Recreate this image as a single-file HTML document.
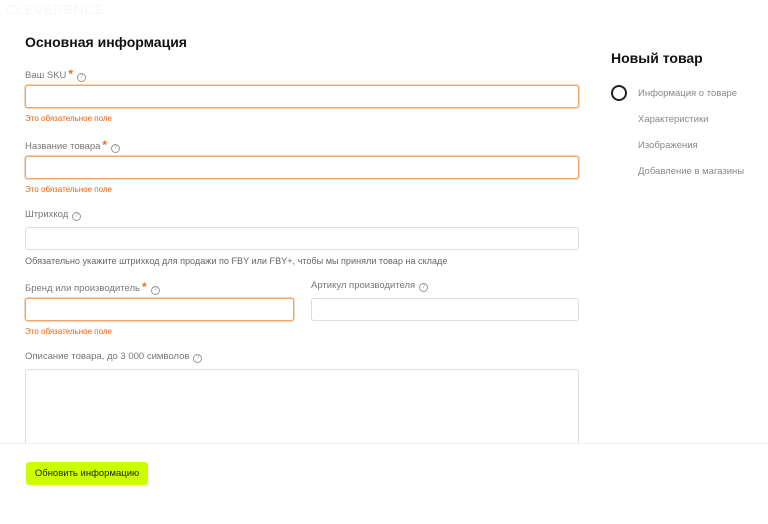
<!DOCTYPE html><html><head><meta charset="utf-8"><style>
*{box-sizing:border-box;margin:0;padding:0}
body{width:768px;height:524px;background:#fff;font-family:"Liberation Sans",sans-serif;position:relative;overflow:hidden;color:#222}
.a{position:absolute}
.t{font-size:14px;font-weight:bold;color:#111}
.l{font-size:9.5px;color:#777;white-space:nowrap}
.l b{color:#f06a1e;font-size:12px;margin-left:2px}
.q{display:inline-block;width:9px;height:9px;border:1px solid #999;border-radius:50%;font-size:6px;line-height:7px;text-align:center;color:#999;margin-left:4px;vertical-align:0}
.i{border:1px solid #ddd;border-radius:3px;background:#fff}
.e{border-color:#f0a56a;box-shadow:0 0 0 1px #f7d2b3}
.er{font-size:8px;color:#e8620f}
.s{font-size:9.5px;color:#888}
</style></head><body>
<div class="a" style="left:6px;top:2px;font-size:13px;color:#f6f6f6;letter-spacing:1px">CLEVERENCE</div>
<div class="a t" style="left:25px;top:34px">Основная информация</div>
<div class="a l" style="left:25px;top:67px">Ваш SKU<b>*</b><span class="q">?</span></div>
<div class="a i e" style="left:25px;top:85px;width:554px;height:23px"></div>
<div class="a er" style="left:25px;top:114px">Это обязательное поле</div>
<div class="a l" style="left:25px;top:138px">Название товара<b>*</b><span class="q">?</span></div>
<div class="a i e" style="left:25px;top:156px;width:554px;height:23px"></div>
<div class="a er" style="left:25px;top:185px">Это обязательное поле</div>
<div class="a l" style="left:25px;top:209px">Штрихкод<span class="q">?</span></div>
<div class="a i" style="left:25px;top:227px;width:554px;height:23px"></div>
<div class="a l" style="left:25px;top:256px;color:#666;font-size:9.1px">Обязательно укажите штрихкод для продажи по FBY или FBY+, чтобы мы приняли товар на складе</div>
<div class="a l" style="left:25px;top:280px">Бренд или производитель<b>*</b><span class="q">?</span></div>
<div class="a l" style="left:311px;top:280px">Артикул производителя<span class="q">?</span></div>
<div class="a i e" style="left:25px;top:298px;width:269px;height:23px"></div>
<div class="a i" style="left:311px;top:298px;width:268px;height:23px"></div>
<div class="a er" style="left:25px;top:327px">Это обязательное поле</div>
<div class="a l" style="left:25px;top:351px">Описание товара, до 3 000 символов<span class="q">?</span></div>
<div class="a i" style="left:25px;top:369px;width:554px;height:90px"></div>
<div class="a" style="left:0;top:443px;width:768px;height:81px;background:#fff;border-top:1px solid #eee"></div>
<div class="a" style="left:26px;top:462px;width:122px;height:23px;background:#cbff00;border-radius:3px;font-size:9.5px;line-height:23px;text-align:center;color:#222">Обновить информацию</div>
<div class="a t" style="left:611px;top:50px">Новый товар</div>
<div class="a" style="left:611px;top:85px;width:16px;height:16px;border:2px solid #222;border-radius:50%"></div>
<div class="a s" style="left:638px;top:88px">Информация о товаре</div>
<div class="a s" style="left:638px;top:114px">Характеристики</div>
<div class="a s" style="left:638px;top:140px">Изображения</div>
<div class="a s" style="left:638px;top:166px">Добавление в магазины</div>
</body></html>
